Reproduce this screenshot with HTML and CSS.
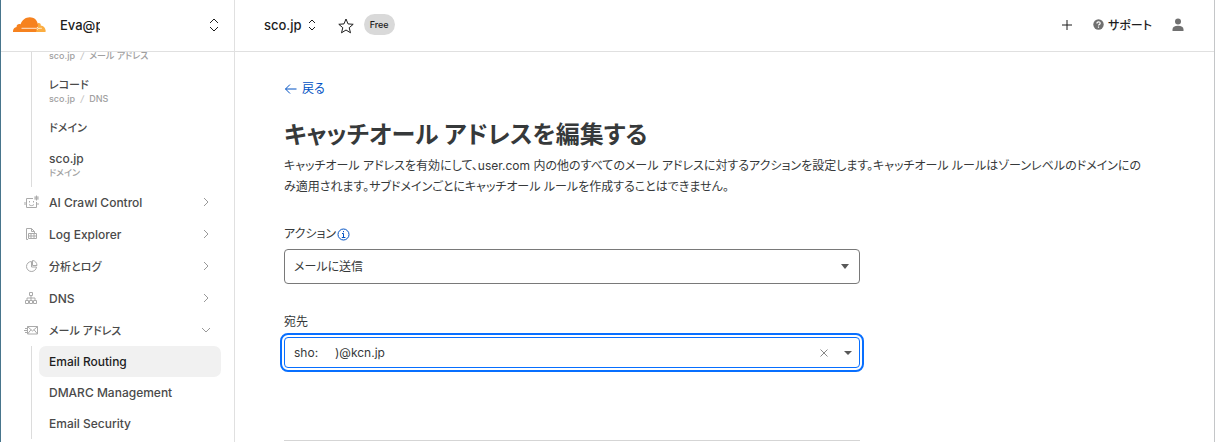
FILE: index.html
```html
<!DOCTYPE html>
<html lang="ja">
<head>
  <meta charset="UTF-8">
  <meta name="viewport" content="width=device-width, initial-scale=1.0">
  <title>キャッチオール アドレスを編集する</title>
  <link rel="stylesheet" href="styles.css">
</head>
<body>
<aside class="sidebar">
  <div class="account">
    <svg class="logo" width="33" height="16" viewBox="0 0 33 16">
      <path fill="#fbad41" d="M25 6.2c.7-.4 1.600-.3 2.200.3.500.5.700 1.200.500 1.900 2.700.1 4.700 2.300 5 5.300 0 .700-.2 1.300-.6 1.300H22z"/>
      <path fill="#f6821f" d="M0 15c-.2-2.800 1.200-4.700 3.600-5-.2-2.200 1.800-3.600 4-2.700C8.800 3 12.700.2 16.800.2c4.300 0 7.200 2.800 8 6.500.5 2-.4 4.100-1.200 6.500L23 15z"/>
      <path fill="none" stroke="#fff" stroke-width=".8" d="M8.500 11.300h14.700c1 0 1.400-.5 1.700-1.400M24 12.800c.5-1.200 1.600-1.500 3.200-1.500h1.600"/>
    </svg>
    <span class="account-name">Eva@p</span>
    <button class="icon-btn account-switch" aria-label="アカウントを切り替える">
      <svg width="12" height="14" viewBox="0 0 12 14"><path d="M2 5l4-4 4 4M2 9l4 4 4-4"/></svg>
    </button>
  </div>
  <nav class="nav">
    <ul class="recent">
      <li><a href="#"><small>sco.jp <i>/</i> メール アドレス</small></a></li>
      <li><a href="#"><span class="kana">レコード</span><small>sco.jp <i>/</i> DNS</small></a></li>
      <li><a href="#"><span class="kana">ドメイン</span></a></li>
      <li><a href="#"><span>sco.jp</span><small>ドメイン</small></a></li>
    </ul>
    <ul class="menu">
      <li><a href="#">
        <svg class="menu-icon" width="16" height="14" viewBox="0 0 16 14"><path d="M9 3.500H2.500v9h10V7M1 7v3M14 8v2M5.500 6v1.500M9.500 6v1.500M5 9.500c1.500 1.500 3.500 1.500 5 0M12.500.500v5M10 3h5M10.800 1.200l3.400 3.600M14.200 1.200l-3.400 3.600"/></svg>
        <span>AI Crawl Control</span>
        <svg class="chevron" width="10" height="10" viewBox="0 0 10 10"><path d="M3 1l4 4-4 4"/></svg>
      </a></li>
      <li><a href="#">
        <svg class="menu-icon" width="16" height="14" viewBox="0 0 16 14"><path d="M4 12.500H2.500v-11h5l3 3V6M7.500 1.500v3h3M4.500 6.500h8v5h-8zM4.500 9h8M7 6.500v5M10 6.500v5"/></svg>
        <span>Log Explorer</span>
        <svg class="chevron" width="10" height="10" viewBox="0 0 10 10"><path d="M3 1l4 4-4 4"/></svg>
      </a></li>
      <li><a href="#">
        <svg class="menu-icon" width="16" height="14" viewBox="0 0 16 14"><path d="M7.500 2.500a5 5 0 1 0 5 5.500h-5zM8.500 1.500V6.500h4.500C13 3.800 11 1.500 8.500 1.500z"/></svg>
        <span class="kana">分析とログ</span>
        <svg class="chevron" width="10" height="10" viewBox="0 0 10 10"><path d="M3 1l4 4-4 4"/></svg>
      </a></li>
      <li><a href="#">
        <svg class="menu-icon" width="16" height="14" viewBox="0 0 16 14"><path d="M5.500 1.500h3v3h-3zM1.500 9.500h3v3h-3zM5.500 9.500h3v3h-3zM9.500 9.500h3v3h-3zM7 4.500v5M3 9.500V7h8v2.500"/></svg>
        <span>DNS</span>
        <svg class="chevron" width="10" height="10" viewBox="0 0 10 10"><path d="M3 1l4 4-4 4"/></svg>
      </a></li>
      <li><a href="#">
        <svg class="menu-icon" width="16" height="14" viewBox="0 0 16 14"><path d="M3.500 3.500h10v7.500h-10zM3.500 3.500l5 4.500 5-4.500M3.500 11l3.500-4.300M13.500 11L10 6.700M1 5.500h2.500M0 7.500h3.500M1 9.500h2.500"/></svg>
        <span class="kana">メール アドレス</span>
        <svg class="chevron" width="10" height="10" viewBox="0 0 10 10"><path d="M1 3l4 4 4-4"/></svg>
      </a></li>
    </ul>
    <ul class="submenu">
      <li><a href="#" class="active">Email Routing</a></li>
      <li><a href="#">DMARC Management</a></li>
      <li><a href="#">Email Security</a></li>
    </ul>
  </nav>
</aside>

<div class="content">
  <header class="topbar">
    <button class="zone">sco.jp
      <svg width="8" height="12" viewBox="0 0 8 12"><path d="M1 4l3-3 3 3M1 8l3 3 3-3"/></svg>
    </button>
    <button class="icon-btn star" aria-label="お気に入り">
      <svg width="16" height="16" viewBox="0 0 16 16"><path d="M8 1l2 4.900 5.200.4-4 3.400 1.300 5.100L8 12l-4.500 2.800 1.300-5.100-4-3.400L6 5.900z"/></svg>
    </button>
    <span class="plan">Free</span>
    <div class="actions">
      <button class="icon-btn add" aria-label="追加">
        <svg width="12" height="12" viewBox="0 0 12 12"><path d="M6 1v10M1 6h10"/></svg>
      </button>
      <a href="#" class="support">
        <svg width="11" height="11" viewBox="0 0 11 11"><circle cx="5.500" cy="5.500" r="5.200" fill="#707070"/><path fill="none" stroke="#fff" stroke-width="1.200" d="M3.900 4.400c0-2.200 3.300-2.100 3.300-.1 0 1.200-1.700 1.200-1.700 2.300M5.500 7.500v1.200"/></svg>
        サポート
      </a>
      <button class="icon-btn user" aria-label="プロフィール">
        <svg width="12" height="14" viewBox="0 0 12 14"><circle cx="6" cy="3.600" r="3"/><path d="M.5 13v-1.500C.5 9 2.500 7.800 6 7.800s5.500 1.200 5.500 3.700V13z"/></svg>
      </button>
    </div>
  </header>

  <main class="page">
    <a href="#" class="back">
      <svg width="13" height="12" viewBox="0 0 13 12"><path d="M12.500 6H1.500M6 1.500L1.500 6 6 10.500"/></svg>
      戻る
    </a>
    <h1>キャッチオール アドレスを編集する</h1>
    <p class="lead">キャッチオール アドレスを有効にして、user.com 内の他のすべてのメール アドレスに対するアクションを設定します。キャッチオール ルールはゾーンレベルのドメインにのみ適用されます。サブドメインごとにキャッチオール ルールを作成することはできません。</p>

    <form class="form">
      <div class="label-row">
        <label for="action">アクション</label>
        <svg width="13" height="13" viewBox="0 0 13 13"><circle cx="6.500" cy="6.500" r="5.500"/><path d="M5 5.500h1.500V9.500M4.800 9.500h3.600M6.500 3v1.200"/></svg>
      </div>
      <div class="field">
        <select id="action">
          <option>メールに送信</option>
        </select>
        <svg class="caret" width="8" height="5" viewBox="0 0 8 5"><path d="M0 0h8L4 5z"/></svg>
      </div>

      <div class="label-row">
        <label for="destination">宛先</label>
      </div>
      <div class="field combo">
        <input id="destination" type="text" value="sho:&nbsp;&nbsp;&nbsp;&nbsp;&nbsp;)@kcn.jp">
        <button type="button" class="icon-btn clear" aria-label="クリア">
          <svg width="8" height="8" viewBox="0 0 8 8"><path d="M.5.5l7 7M7.500.5l-7 7"/></svg>
        </button>
        <button type="button" class="icon-btn open" aria-label="一覧を開く">
          <svg class="caret" width="8" height="4" viewBox="0 0 8 4"><path d="M0 0h8L4 4z"/></svg>
        </button>
      </div>
      <hr>
    </form>
  </main>
</div>
</body>
</html>
```

FILE: styles.css
```css
* {
  box-sizing: border-box;
  margin: 0;
  padding: 0;
}

body {
  display: flex;
  height: 100vh;
  overflow: hidden;
  border-left: 1px solid #47758c;
  border-right: 1px solid #c4c6c8;
  background: #fff;
  color: #36393a;
  font-family: Inter, "Noto Sans CJK JP", sans-serif;
  font-feature-settings: "palt";
  font-size: 12px;
}

ul {
  list-style: none;
}

a {
  color: inherit;
  text-decoration: none;
}

svg {
  flex-shrink: 0;
  fill: none;
  stroke: currentColor;
}

button,
input,
select {
  border: none;
  background: none;
  color: inherit;
  font: inherit;
  font-feature-settings: inherit;
}

.icon-btn {
  display: flex;
}

/* Sidebar */
.sidebar {
  display: flex;
  flex-direction: column;
  flex-shrink: 0;
  width: 234px;
  border-right: 1px solid #e0e0e0;
}

.account {
  display: flex;
  flex-shrink: 0;
  align-items: center;
  height: 52px;
  padding: 0 14px 2px 12px;
  border-bottom: 1px solid #e0e0e0;
  color: #1d1d1d;
}

.logo {
  stroke: none;
}

.account-name {
  width: 40px;
  margin-left: 14px;
  overflow: hidden;
  font-size: 13px;
  font-weight: 500;
}

.account-switch {
  margin-left: auto;
}

.nav {
  flex: 1;
  overflow: hidden;
  color: #4a4a4a;
  font-size: 12px;
  font-weight: 500;
}

.kana {
  font-size: 11px;
}

.recent {
  margin: -9px 0 -1px 30px;
  border-left: 1px solid #dcdcdc;
}

.recent a {
  display: block;
  padding: 7px 0 8px 17px;
}

.recent span,
.recent small {
  display: block;
  line-height: 16px;
}

.recent small {
  color: #a0a0a0;
  font-size: 9px;
  line-height: 12px;
}

.recent i {
  margin: 0 3px;
  color: #c4c4c4;
}

.menu a {
  display: flex;
  align-items: center;
  height: 32px;
  padding: 0 23px;
}

.menu span {
  flex: 1;
  margin-left: 9px;
}

.menu-icon {
  color: #aaa;
}

.chevron {
  color: #999;
}

.submenu {
  margin: 0 13px 0 30px;
  border-left: 1px solid #dcdcdc;
}

.submenu a {
  display: flex;
  align-items: center;
  height: 31px;
  margin-left: 7px;
  padding: 0 10px;
  border-radius: 7px;
}

.submenu .active {
  background: #f1f1f1;
  color: #1d1d1d;
}

/* Top bar */
.content {
  flex: 1;
  min-width: 0;
}

.topbar {
  display: flex;
  align-items: center;
  height: 52px;
  padding: 0 30px 2px 29px;
  border-bottom: 1px solid #e0e0e0;
  color: #1d1d1d;
}

.zone {
  display: flex;
  align-items: center;
  gap: 6px;
  font-size: 13px;
  font-weight: 500;
}

.star {
  margin: 2px 10px 0 22px;
}

.plan {
  padding: 0 6px;
  border-radius: 11px;
  background: #d9d9d9;
  font-size: 9px;
  font-weight: 500;
  line-height: 21px;
}

.actions {
  display: flex;
  align-items: center;
  gap: 20px;
  margin-left: auto;
}

.support {
  display: flex;
  align-items: center;
  gap: 4px;
  font-weight: 500;
}

.support svg {
  stroke: none;
}

.user svg {
  fill: #707070;
  stroke: none;
}

/* Page */
.page {
  padding: 27px 49px 0;
}

.back {
  display: inline-flex;
  align-items: center;
  gap: 5px;
  color: #0051c3;
  line-height: 20px;
}

h1 {
  margin-top: 18px;
  font-size: 24px;
  line-height: 36px;
}

.lead {
  max-width: 862px;
  margin: 2px 0 27px;
  line-height: 21px;
}

.form {
  max-width: 576px;
}

.label-row {
  display: flex;
  align-items: center;
  gap: 1px;
  margin-bottom: 5px;
  line-height: 20px;
}

.label-row svg {
  color: #0051c3;
}

.field {
  display: flex;
  align-items: center;
  height: 35px;
  margin-bottom: 28px;
  border: 1px solid #797979;
  border-radius: 4px;
}

.field select {
  flex: 1;
  height: 100%;
  margin-right: -18px;
  padding: 0 24px 0 9px;
  appearance: none;
}

.field input {
  flex: 1;
  min-width: 0;
  padding-left: 9px;
  outline: none;
}

.caret {
  margin-right: 10px;
  fill: #595959;
  stroke: none;
  pointer-events: none;
}

.combo {
  height: 31px;
  margin-bottom: 72px;
  border-color: #086fff;
  outline: 2px solid #086fff;
  outline-offset: 2px;
}

.clear {
  margin-right: 16px;
  color: #888;
}

.open .caret {
  margin-right: 7px;
}

hr {
  border: none;
  border-top: 1px solid #d5d5d5;
}
```
